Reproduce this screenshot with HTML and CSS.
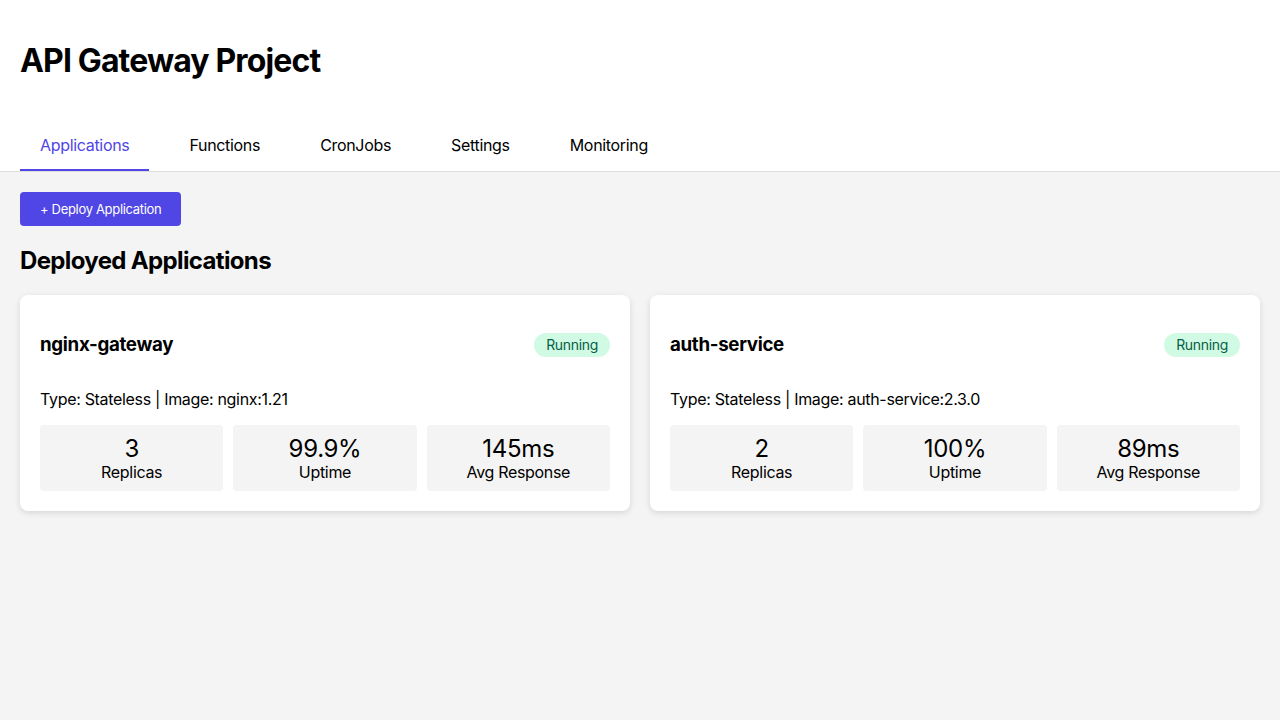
FILE: index.html
```html
<!DOCTYPE html>
<html lang="en">
<head>
<meta charset="utf-8">
<title>API Gateway Project</title>
<link rel="stylesheet" href="styles.css">
</head>
<body>
<header class="header">
  <h1 class="title">API Gateway Project</h1>
  <nav class="tabs">
    <a class="tab active">Applications</a>
    <a class="tab">Functions</a>
    <a class="tab">CronJobs</a>
    <a class="tab">Settings</a>
    <a class="tab">Monitoring</a>
  </nav>
</header>
<main class="content">
  <button class="btn">+ Deploy Application</button>
  <h2 class="section-title">Deployed Applications</h2>
  <div class="grid">
    <div class="card">
      <div class="card-header">
        <h3 class="card-title">nginx-gateway</h3>
        <span class="badge">Running</span>
      </div>
      <p class="meta">Type: Stateless | Image: nginx:1.21</p>
      <div class="metrics">
        <div class="metric"><div class="value">3</div><div class="label">Replicas</div></div>
        <div class="metric"><div class="value">99.9%</div><div class="label">Uptime</div></div>
        <div class="metric"><div class="value">145ms</div><div class="label">Avg Response</div></div>
      </div>
    </div>
    <div class="card">
      <div class="card-header">
        <h3 class="card-title">auth-service</h3>
        <span class="badge">Running</span>
      </div>
      <p class="meta">Type: Stateless | Image: auth-service:2.3.0</p>
      <div class="metrics">
        <div class="metric"><div class="value">2</div><div class="label">Replicas</div></div>
        <div class="metric"><div class="value">100%</div><div class="label">Uptime</div></div>
        <div class="metric"><div class="value">89ms</div><div class="label">Avg Response</div></div>
      </div>
    </div>
  </div>
</main>
</body>
</html>
```
FILE: styles.css
```css
* { box-sizing: border-box; }
html, body { margin: 0; padding: 0; }
body {
  font-family: Inter, "Liberation Sans", sans-serif;
  letter-spacing: -0.02em;
  background: #f4f4f4;
  color: #000;
  min-height: 720px;
}
.header {
  background: #fff;
  border-bottom: 1px solid #dddddd;
  padding: 20px 20px 0;
}
.title {
  font-size: 32px;
  font-weight: 700;
  letter-spacing: -0.027em;
  margin: 21px 0;
  line-height: 39px;
}
.tabs {
  display: flex;
  gap: 20px;
  margin-top: 40px;
}
.tab {
  padding: 16px 20px 14px;
  font-size: 16px;
  line-height: 19px;
  color: #000;
  border-bottom: 2px solid transparent;
}
.tab.active {
  color: #4f46e5;
  border-bottom-color: #4f46e5;
}
.content {
  padding: 20px;
}
.btn {
  font-family: inherit;
  letter-spacing: inherit;
  background: #4f46e5;
  color: #fff;
  border: none;
  border-radius: 4px;
  font-size: 13px;
  height: 34px;
  padding: 0 20px;
}
.section-title {
  font-size: 24px;
  font-weight: 700;
  letter-spacing: -0.027em;
  margin: 20px 0;
  line-height: 29px;
}
.grid {
  display: grid;
  grid-template-columns: 1fr 1fr;
  gap: 20px;
}
.card {
  background: #fff;
  border-radius: 8px;
  padding: 20px;
  box-shadow: 0 2px 6px rgba(0,0,0,0.12);
}
.card-header {
  display: flex;
  justify-content: space-between;
  align-items: center;
}
.card-title {
  font-size: 18.72px;
  font-weight: 700;
  margin: 18.72px 0;
  line-height: 22px;
}
.badge {
  background: #d1fae5;
  color: #065f46;
  font-size: 14px;
  line-height: 16px;
  padding: 4px 12px;
  border-radius: 12px;
}
.meta {
  font-size: 16px;
  line-height: 19px;
  margin: 16px 0;
}
.metrics {
  display: grid;
  grid-template-columns: repeat(3, 1fr);
  gap: 10px;
}
.metric {
  background: #f4f4f4;
  border-radius: 4px;
  padding: 9px 10px;
  text-align: center;
}
.value {
  font-size: 24px;
  line-height: 29px;
}
.label {
  font-size: 16px;
  line-height: 19px;
}
```
